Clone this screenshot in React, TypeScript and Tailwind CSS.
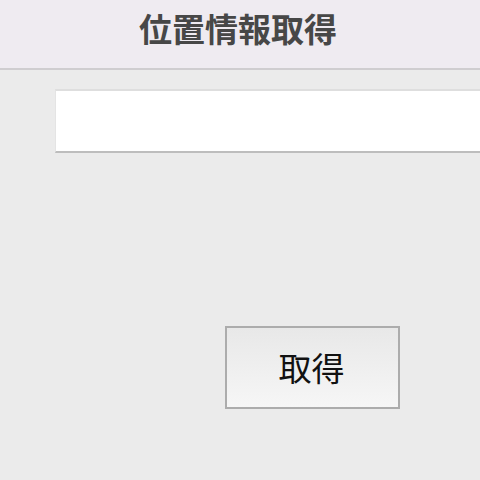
export default function App() {
  return (
    <div
      className="w-[480px] h-[480px] overflow-hidden bg-[#ebebeb] flex flex-col"
      style={{ fontFamily: '"Noto Sans CJK JP", "Noto Sans", sans-serif' }}
    >
      <div className="h-[70px] shrink-0 bg-[#efebf1] border-b-2 border-[#cfcdd0] flex items-center justify-center">
        <span className="text-[33px] font-bold text-[#474747] leading-none ml-[-4px] mt-[-12px]">位置情報取得</span>
      </div>
      <div className="pl-[55px] pt-[19px]">
        <div className="h-[64px] bg-white border-t-2 border-[#dedede] border-b-2 border-b-[#bdbdbd] border-l border-l-[#e4e4e4]" />
      </div>
      <div className="flex pl-[225px] pt-[173px]">
        <button className="w-[175px] h-[83px] border-2 border-[#acacac] bg-gradient-to-b from-[#e8e8e8] to-[#f6f6f6] flex items-center justify-center">
          <span className="text-[33px] font-normal text-[#111] leading-none ml-[-2px]">取得</span>
        </button>
      </div>
    </div>
  );
}
